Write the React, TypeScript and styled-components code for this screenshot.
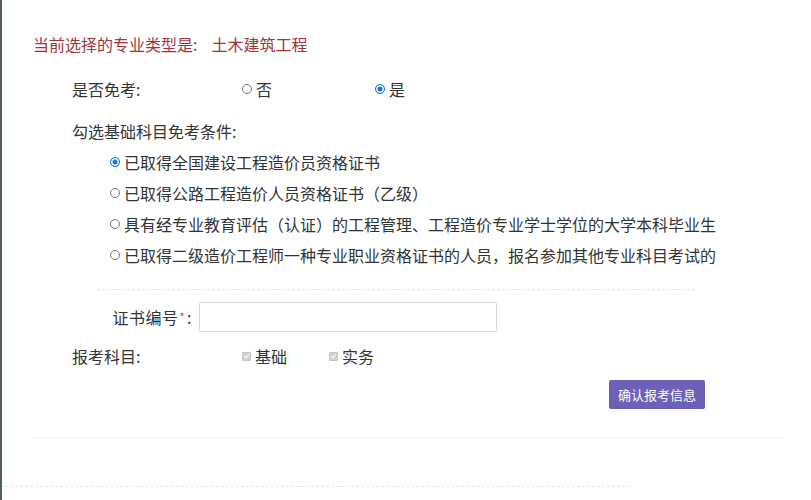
import { createGlobalStyle, styled } from "styled-components";

const GlobalStyle = createGlobalStyle`
  html, body {
    margin: 0;
    padding: 0;
    background: #fff;
  }
  body {
    font-family: "Noto Sans CJK SC", "Noto Sans", sans-serif;
    color: #333;
  }
`;

const Page = styled.div`
  width: 811px;
  height: 500px;
  box-sizing: border-box;
  border-left: 2px solid #4f5e64;
  display: flex;
  flex-direction: column;
  overflow: hidden;
`;

const Title = styled.div`
  margin: 33px 0 0 31px;
  height: 22px;
  line-height: 22px;
  font-size: 16px;
  color: #a3323a;
  display: flex;
`;

const TitleValue = styled.span`
  margin-left: 14px;
`;

const Form = styled.div`
  padding-left: 70px;
  display: flex;
  flex-direction: column;
`;

const Row = styled.div<{ $top: number }>`
  margin-top: ${(p) => p.$top}px;
  height: 22px;
  display: flex;
  align-items: center;
  font-size: 16px;
  line-height: 22px;
`;

const Label = styled.span<{ $width?: number }>`
  width: ${(p) => (p.$width ? `${p.$width}px` : "auto")};
  flex-shrink: 0;
  color: #333;
`;

const Choice = styled.label<{ $width?: number }>`
  width: ${(p) => (p.$width ? `${p.$width}px` : "auto")};
  display: flex;
  align-items: center;
  gap: 4px;
  color: #333;
`;

const Radio = styled.span<{ $checked?: boolean }>`
  width: 10px;
  height: 10px;
  box-sizing: border-box;
  border-radius: 50%;
  border: 1px solid ${(p) => (p.$checked ? "#1a73e8" : "#767676")};
  background: ${(p) => (p.$checked ? "#1a73e8" : "#fff")};
  box-shadow: ${(p) => (p.$checked ? "inset 0 0 0 1.5px #fff" : "none")};
  flex-shrink: 0;
`;

const Check = styled.span`
  width: 9px;
  height: 9px;
  box-sizing: border-box;
  border-radius: 1px;
  background: #d0d0d0;
  border: 1px solid #c4c4c4;
  position: relative;
  flex-shrink: 0;
  &::after {
    content: "";
    position: absolute;
    left: 2px;
    top: 0px;
    width: 2px;
    height: 4px;
    border: solid #fff;
    border-width: 0 1.2px 1.2px 0;
    transform: rotate(40deg);
  }
`;

const OptionList = styled.div`
  margin-top: 4px;
  padding-left: 38px;
  display: flex;
  flex-direction: column;
`;

const Option = styled.label`
  height: 31px;
  display: flex;
  align-items: center;
  gap: 4px;
  font-size: 16px;
  color: #333;
`;

const Dotted = styled.div<{ $top: number; $left: number; $width: number }>`
  margin-top: ${(p) => p.$top}px;
  margin-left: ${(p) => p.$left}px;
  width: ${(p) => p.$width}px;
  border-top: 1px dashed #e6e6e6;
`;

const CertRow = styled.div`
  margin-top: 12px;
  display: flex;
  align-items: center;
  font-size: 16px;
`;

const CertLabel = styled.span`
  width: 120px;
  text-align: right;
  color: #333;
  letter-spacing: 0.5px;
`;

const Star = styled.span`
  color: #d9363e;
  font-size: 11px;
  margin: 0 2px 0 1px;
  position: relative;
  top: -3px;
`;

const Input = styled.input`
  margin-left: 7px;
  width: 298px;
  height: 30px;
  box-sizing: border-box;
  border: 1px solid #dadada;
  border-radius: 2px;
  outline: none;
`;

const Actions = styled.div`
  margin-top: 13px;
  padding-left: 607px;
  display: flex;
`;

const Button = styled.button`
  width: 96px;
  height: 29px;
  border: none;
  border-radius: 2px;
  background: #6d60b7;
  color: #fff;
  font-family: "Noto Sans CJK SC", sans-serif;
  font-size: 13px;
  padding: 0;
`;

const Rule = styled.div`
  margin: 28px 0 0 30px;
  width: 750px;
  border-top: 1px solid #f2f2f2;
`;

const options = [
  "已取得全国建设工程造价员资格证书",
  "已取得公路工程造价人员资格证书（乙级）",
  "具有经专业教育评估（认证）的工程管理、工程造价专业学士学位的大学本科毕业生",
  "已取得二级造价工程师一种专业职业资格证书的人员，报名参加其他专业科目考试的",
];

export default function App() {
  return (
    <Page>
      <GlobalStyle />
      <Title>
        当前选择的专业类型是:
        <TitleValue>土木建筑工程</TitleValue>
      </Title>
      <Form>
        <Row $top={23}>
          <Label $width={170}>是否免考:</Label>
          <Choice $width={133}>
            <Radio />否
          </Choice>
          <Choice>
            <Radio $checked />是
          </Choice>
        </Row>
        <Row $top={20}>
          <Label>勾选基础科目免考条件:</Label>
        </Row>
        <OptionList>
          {options.map((text, i) => (
            <Option key={text}>
              <Radio $checked={i === 0} />
              {text}
            </Option>
          ))}
        </OptionList>
      </Form>
      <Dotted $top={19} $left={95} $width={598} />
      <Form>
        <CertRow>
          <CertLabel>
            证书编号<Star>*</Star>:
          </CertLabel>
          <Input />
        </CertRow>
        <Row $top={13}>
          <Label $width={170}>报考科目:</Label>
          <Choice $width={87}>
            <Check />基础
          </Choice>
          <Choice>
            <Check />实务
          </Choice>
        </Row>
      </Form>
      <Actions>
        <Button>确认报考信息</Button>
      </Actions>
      <Rule />
      <Dotted $top={48} $left={-2} $width={630} />
    </Page>
  );
}
